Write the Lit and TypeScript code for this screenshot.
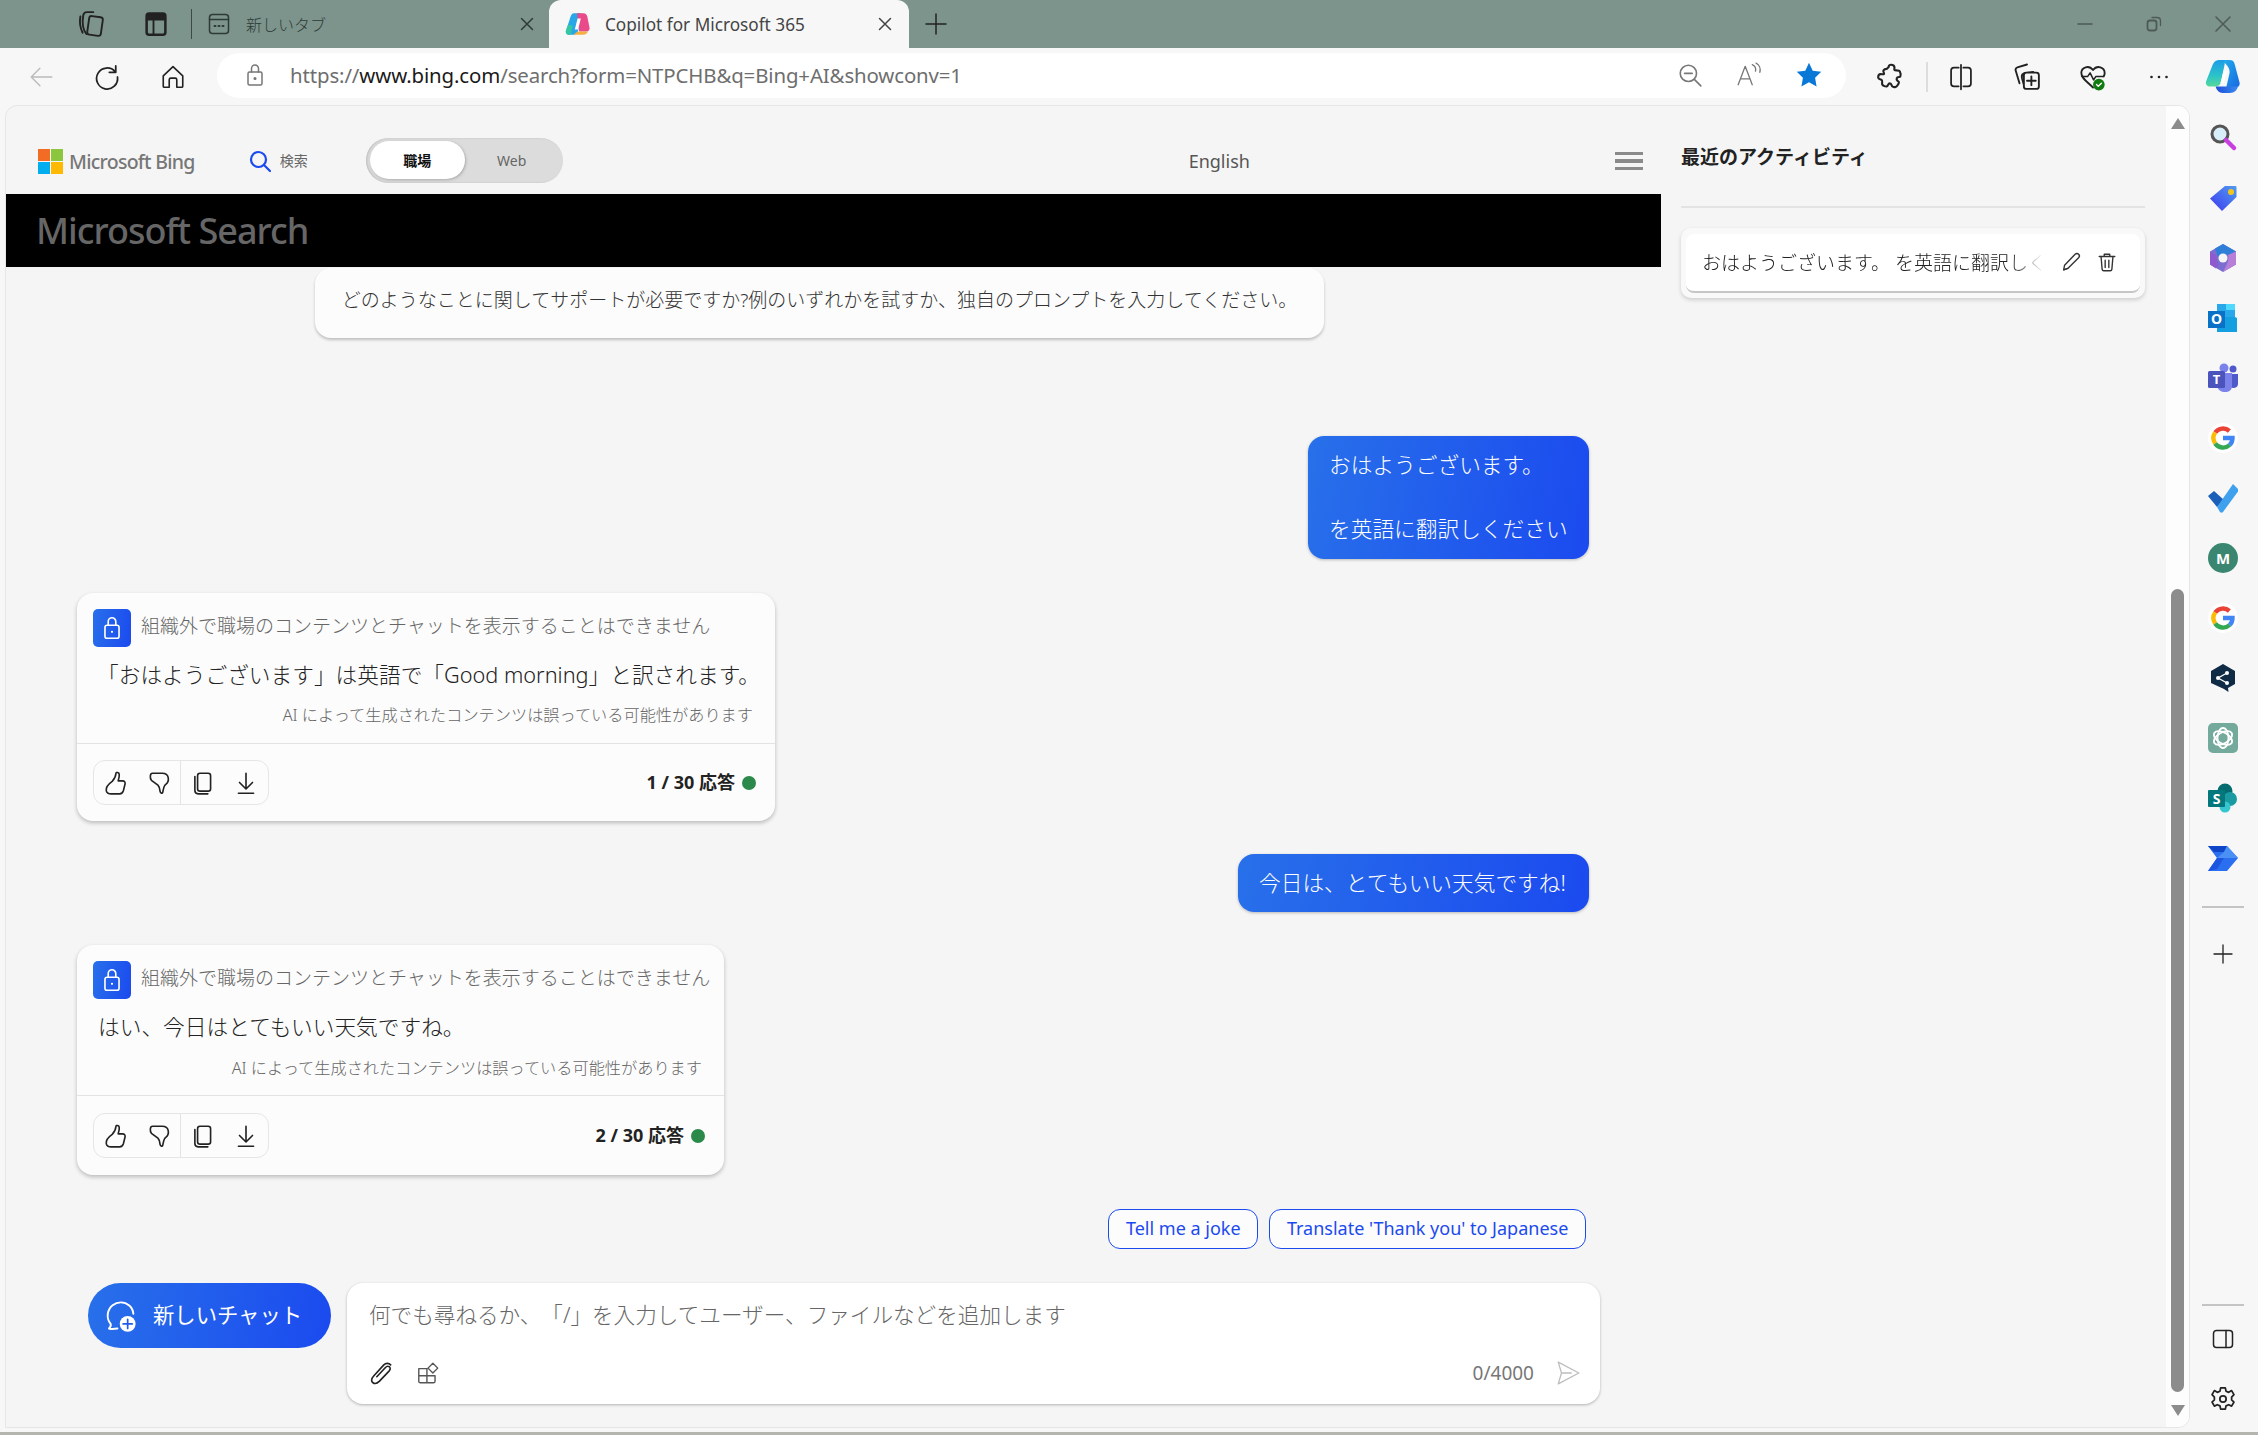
import { LitElement, html, css, svg } from "lit";
import { customElement } from "lit/decorators.js";

const ic = (size: number, box: number, body: unknown, cls = "i") =>
  html`<svg class=${cls} width=${size} height=${size} viewBox="0 0 ${box} ${box}">${body}</svg>`;

const gGrad = svg`<path d="M21.400 8A9.500 9.500 0 0 0 7.200 9.600" stroke="#ea4335" stroke-width="4.400" fill="none"/><path d="M7.200 9.600a9.500 9.500 0 0 0 0 10.800" stroke="#fbbc05" stroke-width="4.400" fill="none"/><path d="M7.200 20.400A9.500 9.500 0 0 0 21.600 22" stroke="#34a853" stroke-width="4.400" fill="none"/><path d="M21.600 22a9.500 9.500 0 0 0 2.900-7H15" stroke="#4285f4" stroke-width="4.400" fill="none"/>`;
const google = svg`<circle cx="15" cy="15" r="15" fill="#fff"/>${gGrad}`;

const copilot = svg`
  <defs>
    <linearGradient id="cpa" x1="0" y1="0" x2="0" y2="1"><stop offset="0" stop-color="#1b9de8"/><stop offset=".6" stop-color="#2cc4c8"/><stop offset="1" stop-color="#56d89a"/></linearGradient>
    <linearGradient id="cpb" x1="0" y1="0" x2="1" y2="1"><stop offset="0" stop-color="#1fb0ee"/><stop offset="1" stop-color="#1868e0"/></linearGradient>
    <linearGradient id="cpc" x1="0" y1="0" x2="1" y2="0"><stop offset="0" stop-color="#1d4ed8"/><stop offset="1" stop-color="#3a8cf0"/></linearGradient>
  </defs>
  <path d="M17 1h7c3 0 4.500 1.500 5 4l4.500 17c.8 3-1 5-4 5H21l3-13c1-5-2-8-7-13z" fill="url(#cpb)"/>
  <path d="M19 1h-5c-3 0-5 2-6 5L2 21c-1 3 1 5 4 5h5c3 0 4.500-2 5-4l3.500-17c.3-2.500 .5-3 -.5-4z" fill="url(#cpa)"/>
  <path d="M11 26h18c1.500 0 3 0 3.500-1-1.500 5-4 7-8 7h-7c-3 0-5.500-2-6.500-6z" fill="url(#cpc)"/>
  <path d="M18.500 11h3l-3 12h-3z" fill="#fff"/>`;

const copilotColor = svg`
  <path d="M9 2h6c1 0 1.600 1 1.300 2L13 18c-.5 3-2.500 4-4.500 4H5C2.500 22 1 20 2 17.500L5 8.500C6 5 7 2 9 2z" fill="#29a6e8"/>
  <path d="M12 2h6c2 0 3 1.500 3.500 3l2 10c.5 2-.5 4-3 4H14z" fill="#e84a8a"/>
  <path d="M5 22c-2.500 0-4-2-3-4.500l2-5 4 1-2 8.500z" fill="#34c8a0"/>
  <path d="M9 22h9c2 0 3.500-1.500 4-3H14c-2 0-3.500 1.500-5 3z" fill="#f5b042"/>
  <path d="M12.500 7h3L13 17h-3z" fill="#fff"/>`;

const sideTop = [
  svg`<circle cx="12" cy="11" r="8" fill="#d8eef8" stroke="#555" stroke-width="3"/><path d="M18 17l8 8" stroke="#c83fe0" stroke-width="4.500" stroke-linecap="round"/>`,
  svg`<defs><linearGradient id="tg" x1="1" y1="0" x2="0" y2="1"><stop offset="0" stop-color="#4f9cf0"/><stop offset="1" stop-color="#3f38f0"/></linearGradient></defs><path d="M17 3h10c1 0 1.500 .5 1.500 1.500V14L14 28 2 15.500z" fill="url(#tg)"/><circle cx="23" cy="9" r="3" fill="#f5c518"/>`,
  svg`<path d="M15 1l13 7.500v13L15 29 2 21.500v-13z" fill="#7a6fd0"/><path d="M15 1l13 7.500-8 3.500c-3-2-8-1-10 2L7 5.500z" fill="#2f7fd8"/><path d="M2 8.500L9 13c-1 3 0 6 2 8l-3 4.500-6-4z" fill="#8f5ad0"/><path d="M20 12l8-3.500v13L15 29l4-8c1-3 2-6 1-9z" fill="#b77fd8"/><circle cx="15" cy="15" r="4.500" fill="#f5f5f5"/>`,
  svg`<path d="M9 1h18v13H9z" fill="#28a8ea"/><path d="M9 14l18 0 2 1v14H9z" fill="#14a0e0"/><path d="M18 1h9v6h-9z" fill="#50d9ff"/><path d="M0 8h17v17H0z" fill="#0a72c6"/><text x="8.500" y="21" class="logo-t" font-size="14">O</text>`,
  svg`<circle cx="25" cy="6" r="3.500" fill="#5059c9"/><path d="M21 11h9v10c0 4-5 5-8 3z" fill="#5059c9"/><circle cx="16" cy="5" r="4.500" fill="#7b83eb"/><path d="M9 10h15v13c0 4-3 6-7 6s-7-2-8-6z" fill="#7b83eb"/><rect x="0" y="8" width="17" height="17" rx="1.500" fill="#4b53bc"/><text x="8.500" y="21" class="logo-t" font-size="13">T</text>`,
  google,
  svg`<path d="M0 13l6-5 10 9-7 7z" fill="#1a5fb8"/><path d="M9 24L25 1l6 6-16 22c-1 1-2 1-3 0z" fill="#3fa0ee"/>`,
];
const sideBottom = [
  svg`<circle cx="15" cy="15" r="15" fill="#3a8670"/><text x="15" y="20.500" class="logo-t" font-size="15">M</text>`,
  google,
  svg`<path d="M15 1l12 7v13l-7 4 .5 4-4.500-3-13-6V8z" fill="#0f2b46"/><circle cx="10" cy="15" r="2" fill="#fff"/><circle cx="19" cy="10" r="2" fill="#fff"/><circle cx="19" cy="20" r="2" fill="#fff"/><path d="M19 10l-9 5 9 5" stroke="#fff" stroke-width="1.300" fill="none"/>`,
  svg`<rect width="30" height="30" rx="5" fill="#74aa9c"/><g fill="none" stroke="#fff" stroke-width="1.800"><ellipse cx="15" cy="15" rx="5.500" ry="10"/><ellipse cx="15" cy="15" rx="5.500" ry="10" transform="rotate(60 15 15)"/><ellipse cx="15" cy="15" rx="5.500" ry="10" transform="rotate(120 15 15)"/></g>`,
  svg`<circle cx="17" cy="8" r="7.500" fill="#036c70"/><circle cx="22" cy="16" r="7" fill="#1a9ba1"/><circle cx="17" cy="24" r="5.500" fill="#37c6d0"/><rect x="0" y="7" width="17" height="17" rx="1" fill="#03787c"/><text x="8.500" y="20.500" class="logo-t" font-size="14">S</text>`,
  svg`<path d="M0 3h19l11 12-11 13H0l9-13z" fill="#2a6ff0"/><path d="M0 3h19l-3 6H6z" fill="#0f46c8"/><path d="M19 3l11 12H16l-7 0 7-6z" fill="#4a90f5"/><path d="M0 28l9-13h7L9 26z" fill="#1c56e0"/>`,
];

const thumbUp = svg`<path d="M8.500 10.500c2-2 3.200-4.500 3.500-7.500.2-1.200 2.800-1 3 1 .2 2-.5 4.500-1 6h4c2 0 2.800 1.500 2.300 3.200l-1.500 6c-.5 1.800-1.700 2.800-3.500 2.800H9c-3 .3-5.500-.5-6-3-.5-2.500 2-6 5.500-8.500z"/>`;
const thumbDown = svg`<path d="M6 3h9c3 0 5 1.500 5.500 4 .5 2.500-.5 5-2.500 6.500-1.500 1.200-2 4-2.500 7-.2 1.500-2.300 1-2.500-.8-.2-2.200-.5-4.200-2-5.700L5 9.500C3.500 7.500 3.500 3 6 3z"/>`;
const copy = svg`<rect x="7" y="3" width="12" height="16.500" rx="2.200"/><path d="M4.500 6v13c0 1.800 1.200 3 3 3h9"/>`;
const download = svg`<path d="M12 3v14M6 11.500l6 6 6-6M5 21.500h14"/>`;

const AiCard = (w: string, body: string, answerCls: string, n: number) => html`
  <section class="card ${w}">
    <div class="card-head">
      <span class="lock">${ic(26, 24, svg`<rect x="5.500" y="9.500" width="13" height="12" rx="2"/><path d="M8.500 9.500V6a3.500 3.500 0 0 1 7 0v3.500"/><circle cx="12" cy="15.500" r="1" fill="currentColor" stroke="none"/>`)}</span>
      <span class="org">組織外で職場のコンテンツとチャットを表示することはできません</span>
    </div>
    <p class="answer ${answerCls}">${body}</p>
    <p class="disc">AI によって生成されたコンテンツは誤っている可能性があります</p>
    <div class="card-foot">
      <div class="acts">
        <span class="act">${ic(26, 24, thumbUp)}</span>
        <span class="act">${ic(26, 24, thumbDown)}</span>
        <span class="act-sep"></span>
        <span class="act">${ic(26, 24, copy)}</span>
        <span class="act">${ic(26, 24, download)}</span>
      </div>
      <span class="count">${n} / 30 応答</span>
      <span class="dot"></span>
    </div>
  </section>`;

@customElement("app-root")
export class AppRoot extends LitElement {
  static styles = css`
    :host { display: block; width: 2258px; height: 1435px; overflow: hidden; background: #f7f7f7;
      font-family: "Noto Sans", "Noto Sans CJK JP", sans-serif; color: #333; text-spacing-trim: space-all; }
    * { box-sizing: border-box; }
    p { margin: 0; }
    svg { display: block; flex: none; }
    .i { fill: none; stroke: currentColor; stroke-width: 1.5; stroke-linecap: round; stroke-linejoin: round; }
    .plain { fill: none; stroke: none; }
    .logo-t { fill: #fff; font-family: "Noto Sans", sans-serif; font-weight: 700; text-anchor: middle; }

    .tabbar { height: 48px; background: #7d948c; display: flex; align-items: center; padding-left: 77px; color: #222; }
    .tb-gap { margin-left: 34px; }
    .tb-sep { width: 1px; height: 30px; background: #3a4a44; margin-left: 20px; }
    .tab { width: 357px; height: 48px; display: flex; align-items: center; padding: 0 15px 0 16px; gap: 16px; font-size: 16px; color: #2e3a36; font-weight: 300; }
    .tab .x { margin-left: auto; }
    .tab.active { width: 360px; background: #f7f7f7; border-radius: 12px 12px 0 0; font-size: 17.200px; color: #444; padding: 0 17px 0 15px; gap: 15px; font-weight: 400; }
    .plus { margin-left: 16px; color: #222; }
    .winctl { margin-left: auto; display: flex; padding-right: 1px; color: #4d5a56; }
    .winctl span { width: 69px; display: flex; justify-content: center; }

    .toolbar { height: 57px; display: flex; align-items: center; padding-left: 8px; color: #222; }
    .tbtn { width: 66px; height: 44px; display: flex; align-items: center; justify-content: center; flex: none; }
    .tbtn.off { color: #bbb; }
    .addr { margin-left: 11px; width: 1629px; height: 45px; margin-top: -3px; border-radius: 23px; background: #fff; display: flex; align-items: center; padding-left: 26px; color: #777; }
    .url { margin-left: 23px; font-size: 20.400px; color: #6e6e6e; white-space: nowrap; letter-spacing: -.12px; }
    .url b { font-weight: 400; color: #1a1a1a; }
    .addr-right { margin-left: auto; display: flex; align-items: center; padding-right: 23px; gap: 33px; color: #777; }
    .tb-right { display: flex; align-items: center; margin-left: 12px; }
    .tb-v { width: 2px; height: 30px; background: #ddd; flex: none; margin: 0 0 0 2px; }
    .tb-last { margin-left: -3px; }

    .main { height: 1330px; display: flex; }
    .panel { width: 2185px; margin-left: 5px; height: 1323px; background: #f5f5f5; border: 1px solid #e6e6e6; border-radius: 12px 12px 12px 0; display: flex; overflow: hidden; }
    .content { width: 1655px; flex: none; display: flex; flex-direction: column; }
    .hdr { height: 88px; display: flex; align-items: center; padding: 22px 0 0 32px; }
    .mslogo { display: grid; grid-template-columns: 12px 12px; grid-auto-rows: 12px; gap: 1px; margin-top: 1px; }
    .mslogo i:nth-child(1) { background: #f36c25; }
    .mslogo i:nth-child(2) { background: #8cc63f; }
    .mslogo i:nth-child(3) { background: #00adef; }
    .mslogo i:nth-child(4) { background: #ffb900; }
    .bing { margin-left: 6px; font-size: 19.500px; color: #777; font-weight: 500; letter-spacing: -.72px; white-space: nowrap; }
    .srch { margin-left: 53px; color: #1b4aef; }
    .srch-t { margin-left: 8px; font-size: 14px; color: #666; padding-bottom: 2px; }
    .toggle { margin-left: 58px; width: 197px; height: 45px; border-radius: 23px; background: #dcdcdc; display: flex; align-items: center; padding-left: 4px; font-size: 14px; box-shadow: inset 1px 0 2px #bbb; margin-top: -2px; }
    .toggle b { width: 95px; height: 38px; border-radius: 19px; background: #fff; display: flex; align-items: center; justify-content: center; color: #111; box-shadow: 1px 1px 3px #aaa; }
    .toggle span { width: 94px; text-align: center; color: #666; }
    .lang { margin-left: 626px; width: 62px; font-size: 18px; color: #555; white-space: nowrap; }
    .ham { margin-left: auto; margin-right: 18px; width: 28px; display: flex; flex-direction: column; gap: 4px; }
    .ham i { height: 3.500px; background: #8a8a8a; }
    .banner { height: 73px; background: #000; display: flex; align-items: center; padding-left: 30px; font-size: 36px; font-weight: 500; color: #666; letter-spacing: -1px; white-space: nowrap; }

    .chat { display: flex; flex-direction: column; flex: 1; }
    .hello { margin: 1px 0 0 309px; width: 1009px; height: 70px; background: #fcfcfc; border-radius: 16px; box-shadow: 0 2px 3px rgba(0,0,0,.22); display: flex; align-items: center; justify-content: center; font-size: 19px; font-weight: 300; color: #333; padding-bottom: 8px; white-space: nowrap; }
    .me { align-self: flex-end; margin-right: 72px; border-radius: 16px; background: linear-gradient(100deg, #2870ea, #1b4aef); color: #fff; font-size: 21.700px; font-weight: 300; white-space: nowrap; box-shadow: 0 1px 3px rgba(0,0,0,.25); }
    .me.one { margin-top: 98px; width: 281px; height: 123px; padding: 13px 21px; line-height: 32px; }
    .me.one p + p { margin-top: 32px; }
    .me.two { margin-top: 33px; width: 351px; height: 58px; padding: 0 21px 3px; display: flex; align-items: center; }
    .card { margin-left: 71px; background: #fcfcfc; border-radius: 16px; box-shadow: 0 2px 4px rgba(0,0,0,.24); height: 228px; display: flex; flex-direction: column; flex: none; }
    .c1 { width: 698px; margin-top: 34px; }
    .c2 { width: 647px; margin-top: 33px; height: 230px; }
    .card-head { display: flex; align-items: center; gap: 10px; padding: 15px 0 0 16px; height: 54px; }
    .lock { width: 38px; height: 38px; border-radius: 5px; background: linear-gradient(100deg, #2870ea, #1b4aef); color: #fff; display: flex; align-items: center; justify-content: center; flex: none; }
    .org { font-size: 19px; font-weight: 300; color: #666; white-space: nowrap; padding-bottom: 5px; }
    .answer { font-size: 21.700px; font-weight: 300; color: #222; white-space: nowrap; line-height: 32px; margin-top: 12px; }
    .a1 { padding-left: 20px; }
    .a2 { padding-left: 21px; }
    .disc { font-size: 16.200px; font-weight: 300; color: #666; text-align: right; padding-right: 22px; line-height: 24px; margin-top: 12px; white-space: nowrap; }
    .c2 .disc { margin-top: 13px; }
    .card-foot { margin-top: 16px; border-top: 1px solid #e3e3e3; flex: 1; display: flex; align-items: center; padding: 0 19px 0 16px; }
    .c2 .card-foot { margin-top: 15px; }
    .acts { width: 176px; height: 45px; border: 1px solid #e6e6e6; border-radius: 12px; display: flex; align-items: center; color: #222; }
    .act { width: 43px; display: flex; justify-content: center; flex: none; }
    .act-sep { width: 1px; height: 100%; background: #e3e3e3; flex: none; }
    .count { margin-left: auto; font-size: 18px; font-weight: 700; color: #222; padding-bottom: 3px; }
    .dot { width: 14px; height: 14px; border-radius: 50%; background: #2b8a4a; margin-left: 7px; }
    .sugg { margin: 34px 75px 0 0; display: flex; justify-content: flex-end; gap: 11px; }
    .sugg span { height: 40px; border: 1.500px solid #1b4aef; border-radius: 12px; color: #1b4aef; background: #fcfcfc; font-size: 18px; font-weight: 400; display: flex; align-items: center; padding: 0 16.700px 2px; white-space: nowrap; }
    .input-row { margin-top: 34px; display: flex; padding-left: 82px; gap: 16px; align-items: flex-start; }
    .newchat { width: 243px; height: 65px; border-radius: 33px; background: linear-gradient(100deg, #2870ea, #1b4aef); color: #fff; display: flex; align-items: center; padding: 0 0 0 17px; gap: 14px; font-size: 21.330px; font-weight: 400; white-space: nowrap; }
    .newchat span { padding-bottom: 4px; }
    .input { width: 1253px; height: 121px; background: #fff; border-radius: 16px; box-shadow: 0 1px 3px rgba(0,0,0,.28); display: flex; flex-direction: column; padding: 17px 22px 0; }
    .ph { font-size: 21.600px; font-weight: 300; color: #666; line-height: 30px; white-space: nowrap; }
    .inp-foot { display: flex; align-items: center; margin-top: 30px; gap: 18px; color: #222; }
    .inp-foot .grid { color: #555; margin-left: 2px; }
    .cnt { margin-left: auto; font-size: 19px; color: #777; font-weight: 400; padding-right: 3px; }
    .send { color: #bdbdbd; margin: 0 -3px 0 0; }

    .side { width: 464px; flex: none; margin-left: 20px; display: flex; flex-direction: column; }
    .side h2 { margin: 0; height: 102px; border-bottom: 2px solid #e3e3e3; font-size: 19px; font-weight: 700; color: #222; line-height: 30px; padding-top: 36px; }
    .hist { margin-top: 20px; height: 70px; background: #f9f9f9; border-radius: 10px; box-shadow: 0 2px 4px rgba(0,0,0,.16); padding: 6px 5px 5px; }
    .hist div { height: 59px; background: #fff; border-radius: 8px; border-bottom: 2px solid #c6c6c6; display: flex; align-items: center; padding: 0 0 2px 16px; color: #333; }
    .hist span { width: 342px; overflow: hidden; white-space: nowrap; font-size: 19px; font-weight: 300; flex: none; color: #222; -webkit-mask-image: linear-gradient(90deg, #000 90%, transparent); mask-image: linear-gradient(90deg, #000 90%, transparent); }
    .hist svg:first-of-type { margin-left: 16px; }
    .hist svg + svg { margin-left: 14px; }

    .strip { width: 23px; margin-left: auto; background: #fdfdfd; display: flex; flex-direction: column; align-items: center; }
    .arrow-u { margin-top: 12px; width: 0; height: 0; border: 7px solid transparent; border-top: 0; border-bottom: 11px solid #8c8c8c; }
    .thumb { width: 13px; height: 803px; margin-top: 460px; border-radius: 7px; background: #8c8c8c; }
    .arrow-d { margin-top: 13px; width: 0; height: 0; border: 7px solid transparent; border-bottom: 0; border-top: 11px solid #8c8c8c; }

    .rail { width: 68px; height: 1330px; flex: none; display: flex; flex-direction: column; align-items: center; padding: 3px 2px 6px 0; color: #222; }
    .rail-i { height: 60px; display: flex; align-items: center; justify-content: center; flex: none; }
    .rail-sep { width: 42px; height: 2px; background: #c4c4c4; flex: none; margin: 18px 0 16px; }
    .rail-sep.low { margin: auto 0 3px; }
    .bar { height: 3px; background: #b5b5b0; margin-top: -3px; position: relative; }
  `;

  render() {
    return html`
      <div class="tabbar">
        ${ic(30, 24, svg`<rect x="9" y="6" width="11" height="15" rx="2" transform="rotate(8 14 13)"/><path d="M7.500 20C5 17 4 11 5 5c.3-1.500 1.500-2.500 3-2.500h5M4.500 19C2.500 15 2 10 2.700 6"/>`)}
        <span class="tb-gap">${ic(30, 24, svg`<rect x="4.500" y="3.500" width="15" height="17" rx="2" stroke-width="2"/><path d="M4.500 8.500h15M10 8.500v12" stroke-width="1.500"/><rect x="5" y="4" width="14" height="4.500" fill="#222" stroke="none"/>`)}</span>
        <span class="tb-sep"></span>
        <div class="tab">
          ${ic(22, 22, svg`<rect x="1.500" y="1.500" width="19" height="19" rx="3"/><path d="M1.500 6.500h19"/><path d="M6.500 13h1M10.500 13h1M14.500 13h1" stroke-width="2"/>`)}
          <span>新しいタブ</span>
          <span class="x">${ic(14, 14, svg`<path d="M1.500 1.500l11 11M12.500 1.500l-11 11"/>`)}</span>
        </div>
        <div class="tab active">
          ${ic(26, 24, copilotColor, "plain")}
          <span>Copilot for Microsoft 365</span>
          <span class="x">${ic(14, 14, svg`<path d="M1.500 1.500l11 11M12.500 1.500l-11 11"/>`)}</span>
        </div>
        <span class="plus">${ic(22, 22, svg`<path d="M11 1v20M1 11h20"/>`)}</span>
        <div class="winctl">
          <span>${ic(16, 16, svg`<path d="M1 8h14"/>`)}</span>
          <span>${ic(16, 16, svg`<rect x="1.500" y="4.500" width="9" height="10" rx="2.500" stroke-width="1.800"/><path d="M6 1.500h5c2 0 3.500 1.500 3.500 3.500v4.500" stroke-width="1.300"/>`)}</span>
          <span>${ic(16, 16, svg`<path d="M1 1l14 14M15 1L1 15"/>`)}</span>
        </div>
      </div>

      <div class="toolbar">
        <span class="tbtn off">${ic(26, 24, svg`<path d="M22 12H3M11 4l-8 8 8 8" stroke-width="1.300"/>`)}</span>
        <span class="tbtn">${ic(28, 24, svg`<path d="M19 7.500A9 9 0 1 0 21 12M19.500 2.500v5.500h-5.500" stroke-width="1.500"/>`)}</span>
        <span class="tbtn">${ic(26, 24, svg`<path d="M3 11L12 2.500 21 11v9.500c0 .8-.6 1-1 1h-4.500v-7c0-1-.7-1.500-1.500-1.500h-4c-.8 0-1.500.5-1.500 1.500v7H4c-.4 0-1-.2-1-1z"/>`)}</span>
        <div class="addr">
          ${ic(24, 24, svg`<rect x="5" y="9" width="14" height="13" rx="1.500"/><path d="M8.500 9V5.500a3.500 3.500 0 0 1 7 0V9"/><circle cx="12" cy="15.500" r=".8" fill="currentColor"/>`)}
          <span class="url">https://<b>www.bing.com</b>/search?form=NTPCHB&q=Bing+AI&showconv=1</span>
          <div class="addr-right">
            ${ic(26, 24, svg`<circle cx="10.500" cy="10.500" r="7.500"/><path d="M16 16l6 6M7 10.500h7"/>`)}
            ${ic(26, 24, svg`<path d="M2 21L8.500 4 15 21M4.500 15.500h8M15 2.500c2.500 1 3.500 3.500 3 6M18.500 1c3 1.500 4.500 5 3.500 8.500" stroke-width="1.200"/>`)}
            ${ic(28, 24, svg`<path d="M12 1.500l3.200 6.800 7.300 1-5.300 5.100 1.300 7.400L12 18.300 5.500 21.800l1.300-7.400L1.500 9.300l7.300-1z" fill="#0a78d7"/>`, "plain")}
          </div>
        </div>
        <div class="tb-right">
          <span class="tbtn">${ic(28, 24, svg`<path d="M10 3.500c0-1.500 1-2 2-2s3 .5 3 2.500c0 1-.5 1.500 0 2s4 0 4.500 1 1 3.500.5 4.500-2.500 0-3 1.500.5 2.500 1.500 3-1 4-2.500 4.500-2.500 0-3-.5-.5-2.500-2-2.500-1.500 2-2.500 2.500-3.500-.5-4-1.500.5-3.500-.5-4-3-.5-3-2 .5-3 2-3 2.500.5 3 0-1-2-.5-3 1.500-1.500 3-1.500z" stroke-width="1.800"/>`)}</span>
          <span class="tb-v"></span>
          <span class="tbtn">${ic(28, 24, svg`<path d="M10 4H6C4.500 4 3.500 5 3.500 6.500v11C3.500 19 4.500 20 6 20h4M14 4h4c1.500 0 2.500 1 2.500 2.500v11c0 1.500-1 2.500-2.500 2.500h-4M12 1.500v21" stroke-width="1.500"/>`)}</span>
          <span class="tbtn">${ic(30, 24, svg`<path d="M6 17L3 7c-.4-1.200.2-2.300 1.300-2.700L12 2M10 20l-2-7c-.5-2 .5-3.500 2-4l7-1" /><rect x="9.500" y="8.500" width="12" height="13" rx="2" fill="#f7f7f7"/><path d="M15.500 11.500v7M12 15h7"/>`)}</span>
          <span class="tbtn">${ic(28, 24, svg`<path d="M12 21C7 16 2 13 2 8.500 2 3.500 8.500 1.500 12 6c3.500-4.500 10-2.500 10 2.500 0 1-.3 2-.8 3" stroke-width="1.600"/><path d="M2.500 11.500h5l2-3 3 6 2-3h6" stroke-width="1.300"/><circle cx="17" cy="18.500" r="5" fill="#107c10" stroke="none"/><path d="M15 18.500l1.500 1.500 2.700-2.700" stroke="#fff" stroke-width="1.200"/>`)}</span>
          <span class="tbtn">${ic(24, 24, svg`<circle cx="4.500" cy="12" r="1.300" fill="#222" stroke="none"/><circle cx="12" cy="12" r="1.300" fill="#222" stroke="none"/><circle cx="19.500" cy="12" r="1.300" fill="#222" stroke="none"/>`)}</span>
          <span class="tbtn tb-last">${ic(36, 34, copilot, "plain")}</span>
        </div>
      </div>

      <div class="main">
        <div class="panel">
          <div class="content">
            <div class="hdr">
              <div class="mslogo"><i></i><i></i><i></i><i></i></div>
              <span class="bing">Microsoft Bing</span>
              <span class="srch">${ic(24, 24, svg`<circle cx="10.500" cy="10.500" r="7.500" stroke-width="2.200"/><path d="M16 16l6 6" stroke-width="2.200"/>`)}</span>
              <span class="srch-t">検索</span>
              <div class="toggle"><b>職場</b><span>Web</span></div>
              <span class="lang">English</span>
              <div class="ham"><i></i><i></i><i></i></div>
            </div>
            <div class="banner">Microsoft Search</div>
            <div class="chat">
              <div class="hello">どのようなことに関してサポートが必要ですか?例のいずれかを試すか、独自のプロンプトを入力してください。</div>
              <div class="me one"><p>おはようございます。</p><p>を英語に翻訳しください</p></div>
              ${AiCard("c1", "「おはようございます」は英語で「Good morning」と訳されます。", "a1", 1)}
              <div class="me two">今日は、とてもいい天気ですね!</div>
              ${AiCard("c2", "はい、今日はとてもいい天気ですね。", "a2", 2)}
              <div class="sugg"><span>Tell me a joke</span><span>Translate 'Thank you' to Japanese</span></div>
              <div class="input-row">
                <div class="newchat">
                  ${ic(34, 30, svg`<path d="M11 26c-3 .5-6 .5-7.500 0 1.500-1.500 2-2.500 1.500-4C2.500 19 2 16 2.500 13 3.500 6.500 9 3 14 3c5.500 0 10.500 4 11 10" stroke-width="1.700"/><circle cx="20" cy="22" r="7" fill="#fff" stroke="none"/><path d="M20 18v8M16 22h8" stroke="#1f5cee" stroke-width="1.500"/>`)}
                  <span>新しいチャット</span>
                </div>
                <div class="input">
                  <div class="ph">何でも尋ねるか、「/」を入力してユーザー、ファイルなどを追加します</div>
                  <div class="inp-foot">
                    ${ic(26, 24, svg`<path d="M20 4.500c-1.800-2-4.500-1.800-6.300 0L4.500 14.500c-2.800 3-2.500 5.300-.8 6.500 1.700 1.200 3.800.7 6-1.500l9-9.500c1.300-1.500 1-3-.1-3.800-1-.7-2.400-.4-3.400.7l-8 8.500"/>`)}
                    <span class="grid">${ic(26, 24, svg`<path d="M3.500 8h7.500v6.500H3.500zM3.500 14.500h7.500V21H5c-1 0-1.500-.5-1.500-1.500zM11 14.500h7.500v5c0 1-.5 1.500-1.500 1.500h-6zM16.500 3l4.500 4.500-4.500 4.500L12 7.500z" stroke-width="1.300"/>`)}</span>
                    <span class="cnt">0/4000</span>
                    <span class="send">${ic(26, 24, svg`<path d="M3 2l19 10L3 22l3-10zM6 12h9" stroke-width="1.200"/>`)}</span>
                  </div>
                </div>
              </div>
            </div>
          </div>
          <aside class="side">
            <h2>最近のアクティビティ</h2>
            <div class="hist"><div>
              <span>おはようございます。 を英語に翻訳しください</span>
              ${ic(22, 24, svg`<path d="M4 20.500l1-5L16.500 3.500c1.200-1 2.800-1 3.800 0s1 2.800 0 3.800L8.500 19z"/><path d="M4 20.500l4.500-1.500"/>`)}
              ${ic(22, 24, svg`<path d="M3.500 6h17M9 6V3.500h6V6M5.500 6l1.200 14c.1 1 .8 1.500 1.800 1.500h7c1 0 1.700-.5 1.800-1.500L18.500 6M10 10v8M14 10v8"/>`)}
            </div></div>
          </aside>
          <div class="strip">
            <span class="arrow-u"></span>
            <span class="thumb"></span>
            <span class="arrow-d"></span>
          </div>
        </div>
        <nav class="rail">
          ${sideTop.concat(sideBottom).map((b) => html`<span class="rail-i">${ic(30, 30, b, "plain")}</span>`)}
          <span class="rail-sep"></span>
          <span class="rail-i">${ic(20, 20, svg`<path d="M10 1v18M1 10h18" stroke-width="1.300"/>`)}</span>
          <span class="rail-sep low"></span>
          <span class="rail-i">${ic(24, 24, svg`<rect x="2.500" y="3.500" width="19" height="17" rx="3"/><path d="M15 3.500v17" stroke-width="1.500"/>`)}</span>
          <span class="rail-i">${ic(28, 24, svg`<path d="M10 2.500h4l.6 2.800 2.300 1 2.500-1.500 2 3.500-2 2 0 2.500 2 1.800-2 3.500-2.500-1.200-2.300 1-.6 2.800h-4l-.6-2.800-2.300-1-2.500 1.200-2-3.500 2-1.800 0-2.500-2-2 2-3.500 2.500 1.500 2.300-1z"/><circle cx="12" cy="12" r="2.700"/>`)}</span>
        </nav>
      </div>
      <div class="bar"></div>
    `;
  }
}
